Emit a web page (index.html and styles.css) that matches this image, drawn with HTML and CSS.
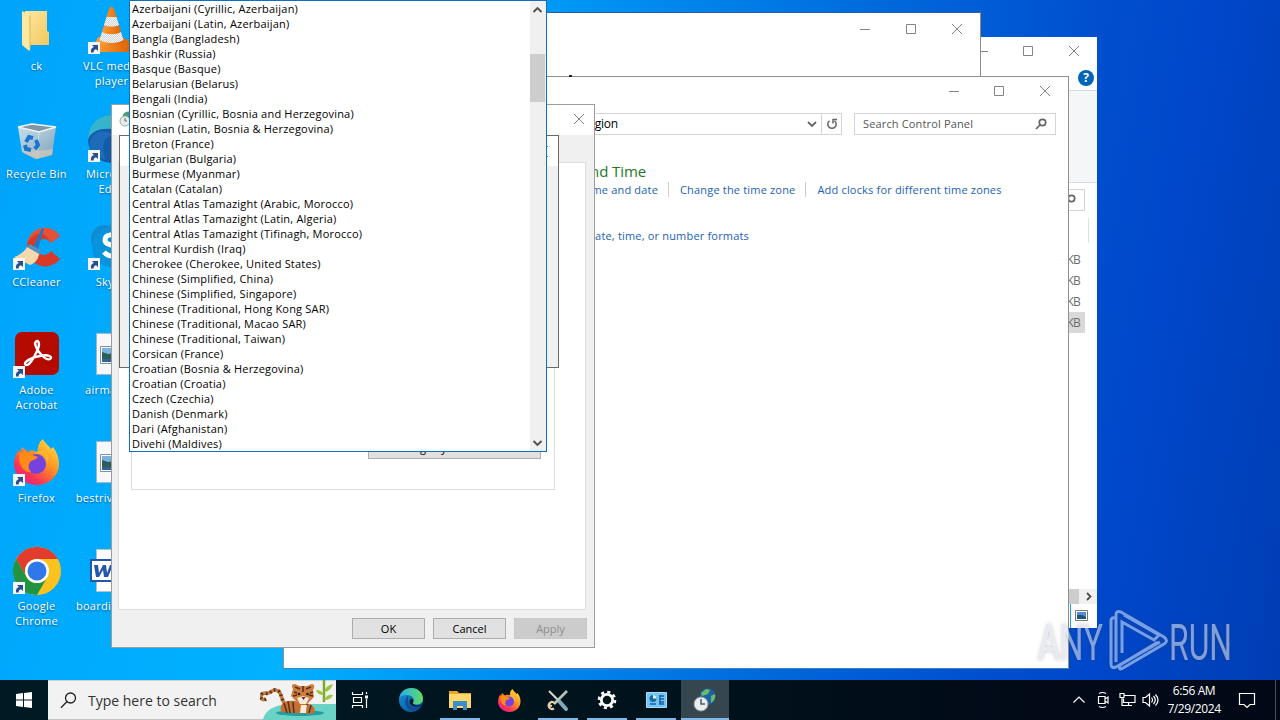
FILE: index.html
```html
<!DOCTYPE html>
<html lang="en">
<head>
    <meta charset="UTF-8">
    <title>Desktop</title>
    <link rel="stylesheet" href="styles.css">
</head>
<body>
    <!-- shared icons -->
    <svg width="0" height="0" class="defs">
        <defs>
            <linearGradient id="edgeBlue" x1="0" y1="0" x2="1" y2="1"><stop offset="0" stop-color="#1493dd"/><stop offset="1" stop-color="#0b4b94"/></linearGradient>
            <linearGradient id="edgeGreen" x1="0" y1="0" x2="1" y2="0"><stop offset="0" stop-color="#24aee8"/><stop offset="1" stop-color="#62dc64"/></linearGradient>
            <linearGradient id="fox" x1="1" y1="0" x2="0.2" y2="1"><stop offset="0" stop-color="#fff04a"/><stop offset="0.45" stop-color="#ff9422"/><stop offset="0.8" stop-color="#f93356"/><stop offset="1" stop-color="#e0209a"/></linearGradient>
            <linearGradient id="folder" x1="0" y1="0" x2="1" y2="1"><stop offset="0" stop-color="#ffe9a3"/><stop offset="1" stop-color="#f2c75c"/></linearGradient>
            <linearGradient id="bin" x1="0" y1="0" x2="1" y2="1"><stop offset="0" stop-color="#dfe8ee"/><stop offset="1" stop-color="#8fa3b0"/></linearGradient>
            <linearGradient id="cone" x1="0" y1="0" x2="1" y2="0"><stop offset="0" stop-color="#ffa53c"/><stop offset="1" stop-color="#dd5c00"/></linearGradient>
            <pattern id="dither" width="2" height="2" patternUnits="userSpaceOnUse"><rect width="2" height="2" fill="#f4f4f4"/><path d="M0 0h1v1H0zM1 1h1v1H1z" fill="#cfd6da"/></pattern>
        </defs>
        <symbol id="shortcut" viewBox="0 0 12 12">
            <rect width="12" height="12" fill="#f4f6f9"/>
            <path d="M3 10.5C2.500 7.500 3.700 5.600 5.900 5L4 3h6v6L8 7.200C6.200 7.600 5.500 8.800 5.700 10.500z" fill="#2b4f8c"/>
        </symbol>
        <symbol id="edge" viewBox="0 0 24 24">
            <circle cx="12" cy="12" r="12" fill="url(#edgeBlue)"/>
            <path d="M.3 10C1.500 3.500 6.500 0 12.500 0 19 0 24 5 24 10.500c0 4-3 6-6.500 6-2.500 0-4-1-3.500-2 1.700-2 .8-5.800-3.500-7C6.500 6.500 2 7.500.3 10z" fill="url(#edgeGreen)"/>
            <path d="M9 8c-4 3-4 10 1.500 14 5 2 10-1 12-5-4 2.500-14 2-13.500-4.500z" fill="#0e4f98"/>
            <path d="M10.500 13.500c0-2 1.300-3 2.500-2.800 1.500.4 1.700 2.400 1 3.500-.8 1.500 1.200 3.200 4.200 3.200 2 0 3.500-.6 4.600-1.200l-.6 1.400c-4 2-11.700.9-11.700-4.100z" fill="#06192a"/>
        </symbol>
        <symbol id="firefox" viewBox="0 0 46 46">
            <path d="M29 0c2 5 6 6 8 10l2-2c4 5 6 11 6 17 0 12-10 21-22 21S0 37 0 25c0-6 2-11 5-14l1 3 2-6 6 5c4-3 8-1 10 1-1-6 1-11 5-14z" fill="url(#fox)"/>
            <circle cx="22" cy="25" r="10" fill="#7442df"/>
            <path d="M5 14c5-1 8-1 11 1l8 3c-2 3-6 3-8 5-2 3-2 7 1 10C9 34 4 25 5 14z" fill="#ff8a16"/>
            <path d="M21 15c6-2 12 3 12 10 3-5 1-10-2-13-4-2-8 0-10 3z" fill="#ffb52c"/>
        </symbol>
        <symbol id="picture" viewBox="0 0 32 42">
            <path d="M.5.5h31v41H.5z" fill="#f8f8f8" stroke="#a5b7c4"/>
            <path d="M4.500 13.500h24v17h-24z" fill="#fff" stroke="#7893aa"/>
            <path d="M6 15h21v14H6z" fill="#78b3df"/>
            <path d="M6 19l6 2 6-1 9 2v7H6z" fill="#2f5d56"/>
            <path d="M6 26h21v3H6z" fill="#31639a"/>
        </symbol>
    </svg>

    <div class="desktop">
        <div class="icons">
            <div class="icon">
                <svg width="48" height="48" viewBox="0 0 48 48">
                    <path d="M12 4h22v20l2 1v13H12z" fill="url(#folder)"/>
                    <path d="M9 4l8 4v34c0 2-1 2-2 1L9 38z" fill="#ffe8a0"/>
                    <path d="M17 8v34" stroke="#dfb553" fill="none"/>
                </svg>
                <span>ck</span>
            </div>
            <div class="icon">
                <svg width="48" height="48" viewBox="0 0 48 48">
                    <path d="M5 12l14-3 24 3-4 28-17 4-13-7z" fill="url(#bin)" opacity=".9"/>
                    <path d="M5 12l14-3 24 3-17 5z" fill="#8196a4" stroke="#eef4f7" stroke-width="1.500"/>
                    <path d="M26 17l-2 27" stroke="#e7edf0" opacity=".6"/>
                    <path d="M10 34l15 2 15-2-1 6-15 4-13-6z" fill="#d7c9bb" opacity=".7"/>
                    <g fill="none" stroke="#1976cc" stroke-width="4"><path d="M13 27l3-5 4 1"/><path d="M23 25l2 5-3 4"/><path d="M18 35l-5-1-1-4"/></g>
                </svg>
                <span>Recycle Bin</span>
            </div>
            <div class="icon">
                <svg width="48" height="48" viewBox="0 0 48 48">
                    <path d="M47 13C37-2 14 5 14 24s22 26 33 12l-9-8c-5 7-14 4-14-4s9-11 14-4z" fill="#d83a27"/>
                    <path d="M47 13C37-2 16 4 14 20c8-12 18-13 24 0z" fill="#ef6042" opacity=".6"/>
                    <path d="M29 5l2 1-6 20-5-2z" fill="#2874bd"/>
                    <path d="M16 21l12 6-1 5-13-6z" fill="#4f91c7"/>
                    <path d="M14 24l12 7c-1 6-4 9-9 11L1 34c6-2 10-5 13-10z" fill="#f3d9ac"/>
                    <use href="#shortcut" x="0" y="35" width="12" height="12"/>
                </svg>
                <span>CCleaner</span>
            </div>
            <div class="icon">
                <svg width="48" height="48" viewBox="0 0 48 48">
                    <rect x="2" y="1" width="44" height="43" rx="7" fill="#b30b00"/>
                    <path d="M22 12c3-5 6 0 2 8-3 7-8 15-11 14-4-2 5-8 14-9 9-2 13 1 10 3-4 2-14-8-15-16z" fill="none" stroke="#fff" stroke-width="2.400"/>
                    <use href="#shortcut" x="0" y="35" width="12" height="12"/>
                </svg>
                <span>Adobe<br>Acrobat</span>
            </div>
            <div class="icon">
                <svg width="48" height="48" viewBox="0 0 48 48">
                    <use href="#firefox" x="1" y="0" width="46" height="46"/>
                    <use href="#shortcut" x="0" y="35" width="12" height="12"/>
                </svg>
                <span>Firefox</span>
            </div>
            <div class="icon">
                <svg width="48" height="48" viewBox="0 0 48 48">
                    <circle cx="24" cy="24" r="24" fill="#fcc31e"/>
                    <path d="M3.200 12A24 24 0 0 1 44.800 12H24A12 12 0 0 0 13.600 30z" fill="#e33b2e"/>
                    <path d="M3.200 12A24 24 0 0 0 24 48L34.400 30A12 12 0 0 1 13.600 30z" fill="#229342"/>
                    <circle cx="24" cy="24" r="12" fill="#fff"/><circle cx="24" cy="24" r="9.500" fill="#3078ea"/>
                    <use href="#shortcut" x="0" y="35" width="12" height="12"/>
                </svg>
                <span>Google<br>Chrome</span>
            </div>
            <div class="icon">
                <svg width="48" height="48" viewBox="0 0 48 48">
                    <path d="M10 30h24l7 4 4 11H3z" fill="url(#cone)"/>
                    <path d="M21 2c1-3 4-3 5 0l10 33c-5 4-20 4-25 0z" fill="url(#cone)"/>
                    <path d="M18.500 10h10l2.500 8c-4 2-11 2-15 0zM14 25c5 3 14 3 19 0l2.500 8c-6 4-18 4-24 0z" fill="url(#dither)"/>
                    <use href="#shortcut" x="0" y="35" width="12" height="12"/>
                </svg>
                <span>VLC media<br>player</span>
            </div>
            <div class="icon">
                <svg width="48" height="48" viewBox="0 0 48 48">
                    <circle cx="24" cy="24" r="24" fill="#115ba9"/>
                    <path d="M0 25C0 10 10 0 24 0s24 12 24 22c-8-11-18-12-25-8C10 13 2 18 0 25z" fill="#35b4ce"/>
                    <path d="M2 25c4-9 15-12 24-4-11-1-13 12-8 24C7 42 0 34 2 25z" fill="#1c6cb9"/>
                    <use href="#shortcut" x="0" y="35" width="12" height="12"/>
                </svg>
                <span>Microsoft<br>Edge</span>
            </div>
            <div class="icon">
                <svg width="48" height="48" viewBox="0 0 48 48">
                    <circle cx="17" cy="16" r="14" fill="#1489d2"/><circle cx="31" cy="32" r="14" fill="#0878d4"/><circle cx="24" cy="24" r="20" fill="#0894dd"/>
                    <path d="M32 15c-5-5-15-4-15 2 0 7 15 4 15 11 0 6-11 7-16 1" fill="none" stroke="#fff" stroke-width="5"/>
                    <use href="#shortcut" x="0" y="35" width="12" height="12"/>
                </svg>
                <span>Skype</span>
            </div>
            <div class="icon">
                <svg width="48" height="48" viewBox="0 0 48 48"><use href="#picture" x="8" y="2" width="32" height="42"/></svg>
                <span>airmarket</span>
            </div>
            <div class="icon">
                <svg width="48" height="48" viewBox="0 0 48 48"><use href="#picture" x="8" y="2" width="32" height="42"/></svg>
                <span>bestriver.png</span>
            </div>
            <div class="icon">
                <svg width="48" height="48" viewBox="0 0 48 48">
                    <path d="M8.500 2.500h31v42h-31z" fill="#fff" stroke="#b4c0ca"/>
                    <path d="M3 13h21v21H3z" fill="#fff" stroke="#2456ae" stroke-width="2"/>
                    <path d="M6 18h4l1 8 4-8h3l1 8 3-8h3l-5 12h-4l-1-7-4 7H8z" fill="#2456ae"/>
                </svg>
                <span>boardinga.rtf</span>
            </div>
        </div>

        <!-- file explorer -->
        <div class="window explorer">
            <div class="titlebar">
                <svg class="controls" width="102" height="12" viewBox="0 0 102 12"><path d="M0 6.500h10M45.500 1.500h9v9h-9zM91 1l10 10M101 1L91 11"/></svg>
            </div>
            <div class="help-row"><span class="help">?</span></div>
            <div class="ribbon"></div>
            <div class="explorer-search">
                <div class="box"><svg width="12" height="12" viewBox="0 0 12 12" class="lens"><circle cx="7.500" cy="4.500" r="3.200"/><path d="M5 7L1 11"/></svg></div>
            </div>
            <div class="preview-edge"></div>
            <div class="sizes">
                <span>KB</span>
                <span>KB</span>
                <span>KB</span>
                <span class="selected">KB</span>
            </div>
            <div class="hscroll">
                <div class="thumb"></div>
                <svg width="18" height="15" viewBox="0 0 18 15"><path d="M8 4l3.500 3.500L8 11" fill="none" stroke="#505050" stroke-width="1.800"/></svg>
            </div>
            <div class="status">
                <svg width="29" height="24" viewBox="0 0 29 24">
                    <path d="M.5 0v24" stroke="#26a0da"/>
                    <path d="M5.500 6.500h12v10h-12z" fill="#fff" stroke="#777"/>
                    <path d="M7 8h9v7H7z" fill="#4f91ce"/><path d="M7 11h5l4 2v2H7z" fill="#1f5377"/>
                </svg>
            </div>
        </div>

        <div class="window back">
            <div class="titlebar">
                <svg class="controls" width="102" height="12" viewBox="0 0 102 12"><path d="M-1 6.500h10M45.500 1.500h9v9h-9zM91 1l10 10M101 1L91 11"/></svg>
            </div>
        </div>

        <!-- control panel -->
        <div class="window panel">
            <div class="titlebar">
                <svg class="controls" width="102" height="12" viewBox="0 0 102 12"><path d="M0 6.500h10M45.500 1.500h9v9h-9zM91 1l10 10M101 1L91 11"/></svg>
            </div>
            <div class="address-row">
                <div class="address">
                    <span>Clock and Region</span>
                    <svg width="10" height="7" viewBox="0 0 10 7"><path d="M1 1l4 4 4-4" fill="none" stroke="#666" stroke-width="1.800"/></svg>
                </div>
                <div class="refresh">
                    <svg width="12" height="12" viewBox="0 0 12 12"><path d="M8.500 2.800A4.200 4.200 0 1 1 3.500 2.800" fill="none" stroke="#666" stroke-width="1.500"/><path d="M1 1.500h4v4" fill="none" stroke="#666" stroke-width="1.500"/></svg>
                </div>
                <div class="box">
                    <span>Search Control Panel</span>
                    <svg width="12" height="12" viewBox="0 0 12 12" class="lens"><circle cx="7.500" cy="4.500" r="3.200"/><path d="M5 7L1 11"/></svg>
                </div>
            </div>
            <div class="categories">
                <h1>Date and Time</h1>
                <div class="links">
                    <a class="set-time">Set the time and date</a>
                    <a class="zone">Change the time zone</a>
                    <a class="clocks">Add clocks for different time zones</a>
                </div>
                <div class="links region-links"><a class="formats">Change date, time, or number formats</a></div>
            </div>
        </div>
        <span class="caret-dot"></span>

        <!-- region dialog -->
        <div class="window region">
            <div class="titlebar">
                <svg width="16" height="16" viewBox="0 0 16 16"><circle cx="10" cy="6" r="5.500" fill="#4f9c73"/><circle cx="7" cy="10" r="5" fill="#e7eceb" stroke="#9aa"/><path d="M7 7v3h2" stroke="#667" fill="none"/></svg>
                <svg class="close" width="12" height="12" viewBox="0 0 12 12"><path d="M1 1l10 10M11 1L1 11"/></svg>
            </div>
            <div class="page">
                <div class="group">
                    <button class="change-locale">Change system locale...</button>
                </div>
            </div>
            <div class="buttons">
                <button>OK</button>
                <button>Cancel</button>
                <button disabled>Apply</button>
            </div>
        </div>

        <div class="window locale">
            <div class="titlebar">
                <svg width="11" height="11" viewBox="0 0 11 11"><path d="M.5.5l10 10M10.500.5l-10 10" stroke="#000" fill="none"/></svg>
            </div>
        </div>

        <div class="dropdown">
            <ul>
                <li>Azerbaijani (Cyrillic, Azerbaijan)</li>
                <li>Azerbaijani (Latin, Azerbaijan)</li>
                <li>Bangla (Bangladesh)</li>
                <li>Bashkir (Russia)</li>
                <li>Basque (Basque)</li>
                <li>Belarusian (Belarus)</li>
                <li>Bengali (India)</li>
                <li>Bosnian (Cyrillic, Bosnia and Herzegovina)</li>
                <li>Bosnian (Latin, Bosnia &amp; Herzegovina)</li>
                <li>Breton (France)</li>
                <li>Bulgarian (Bulgaria)</li>
                <li>Burmese (Myanmar)</li>
                <li>Catalan (Catalan)</li>
                <li>Central Atlas Tamazight (Arabic, Morocco)</li>
                <li>Central Atlas Tamazight (Latin, Algeria)</li>
                <li>Central Atlas Tamazight (Tifinagh, Morocco)</li>
                <li>Central Kurdish (Iraq)</li>
                <li>Cherokee (Cherokee, United States)</li>
                <li>Chinese (Simplified, China)</li>
                <li>Chinese (Simplified, Singapore)</li>
                <li>Chinese (Traditional, Hong Kong SAR)</li>
                <li>Chinese (Traditional, Macao SAR)</li>
                <li>Chinese (Traditional, Taiwan)</li>
                <li>Corsican (France)</li>
                <li>Croatian (Bosnia &amp; Herzegovina)</li>
                <li>Croatian (Croatia)</li>
                <li>Czech (Czechia)</li>
                <li>Danish (Denmark)</li>
                <li>Dari (Afghanistan)</li>
                <li>Divehi (Maldives)</li>
            </ul>
            <div class="scrollbar">
                <svg width="15" height="17" viewBox="0 0 15 17"><path d="M3.500 11l4-4 4 4"/></svg>
                <div class="thumb"></div>
                <svg width="15" height="17" viewBox="0 0 15 17"><path d="M3.500 7l4 4 4-4"/></svg>
            </div>
        </div>

        <svg class="watermark" width="210" height="70" viewBox="0 0 210 70">
            <g class="letters">
                <text x="3" y="54" textLength="65" lengthAdjust="spacingAndGlyphs">ANY</text>
                <text x="134" y="54" textLength="63" lengthAdjust="spacingAndGlyphs">RUN</text>
            </g>
            <g class="play">
                <path d="M80 12q-4-1-4 3v43q0 5 5 3l44-25"/>
                <path d="M81 56V9q0-5 5-3l43 25q5 4 0 7L88 62q-5 3-3-3l38-23"/>
                <path d="M87 47V16l32 18 5-5-35-20"/>
            </g>
        </svg>
    </div>

    <div class="taskbar">
        <div class="start">
            <svg width="16" height="16" viewBox="0 0 16 16"><path d="M0 2l7-1v6.500H0zM8 1l8-1v7.500H8zM0 8.500h7V15l-7-1zM8 8.500h8V16l-8-1z" fill="#fff"/></svg>
        </div>
        <div class="search">
            <svg width="17" height="17" viewBox="0 0 17 17"><circle cx="10.500" cy="6" r="5" fill="none" stroke="#222" stroke-width="1.300"/><path d="M7 9.500L1 15.800" stroke="#222" stroke-width="1.300"/></svg>
            <span>Type here to search</span>
            <svg class="tiger" width="76" height="40" viewBox="0 0 76 40">
                <path d="M3 40C6 26 22 23 45 24h31v16z" fill="#6ad3c6"/>
                <ellipse cx="40" cy="33" rx="24" ry="3" fill="#249da0"/>
                <path d="M6 19C0 22-1 13 5 13c6 2 6-4 11-3 6 1 4 8 9 14" fill="none" stroke="#c9783a" stroke-width="3.500"/>
                <path d="M6 19C0 22-1 13 5 13c6 2 6-4 11-3 6 1 4 8 9 14" fill="none" stroke="#463127" stroke-width="3.500" stroke-dasharray="1.500 3"/>
                <path d="M21 32c-2-9 4-12 14-11l14 3c7 2 7 8 3 10z" fill="#c56f31"/>
                <path d="M24 23l3 10M28 21l2 12M33 22l1 11M47 24l-2 9M51 25l-2 8" stroke="#513224" stroke-width="1.500"/>
                <path d="M33 9q-3-5 2-5l4 2h8l5-2q4 1 1 6l1 7-7 7h-8l-8-8z" fill="#d07c3c"/>
                <path d="M37 18l6-2 6 2-3 6h-6zM41 25h6l-1 8h-6z" fill="#f6ead9"/>
                <path d="M35 7l5 2M43 6v6M51 7l-5 2M33 16l4-1M53 16l-4-1M34 12l3 1M53 12l-3 1" stroke="#513224" stroke-width="1.600"/>
                <circle cx="39" cy="14" r="1.300" fill="#222"/><circle cx="47.500" cy="14" r="1.300" fill="#222"/>
                <path d="M41.500 17h4l-2 3z" fill="#573030"/>
                <path d="M64 22V0" stroke="#79a92f" stroke-width="2.500"/>
                <path d="M64 15q-7 0-8-5 6 0 8 5zM64 12q6 0 9-8-7 1-9 8zM64 20q7 0 9-5-6-1-9 5z" fill="#9bc53e"/>
            </svg>
        </div>
        <div class="task-view">
            <svg width="18" height="18" viewBox="0 0 18 18"><path d="M1 3.500h11M1 14.500h11M2.500 6.500h8v5h-8zM1.500 1v2.500M11.500 1v2.500M1.500 14.500V17M11.500 14.500V17M15.500 1v2M15.500 8v9" fill="none" stroke="#fff" stroke-width="1.200"/><path d="M14 4.500h3v3h-3z" fill="#fff"/></svg>
        </div>
        <div class="apps">
            <div class="app"><svg width="24" height="24"><use href="#edge"/></svg></div>
            <div class="app running"><svg width="22" height="20" viewBox="0 0 22 20"><path d="M0 1h8l2 2h12v15H0z" fill="#e7a52a"/><path d="M0 4h22v14H0z" fill="#ffd86b"/><path d="M4 11h14v9h-4v-4H8v4H4z" fill="#3c8cc9"/></svg></div>
            <div class="app"><svg width="23" height="23"><use href="#firefox"/></svg></div>
            <div class="app running"><svg width="24" height="24" viewBox="0 0 24 24"><path d="M3 3l9 9" stroke="#d8d8ce" stroke-width="2"/><path d="M13 13l7 8" stroke="#7fa9bb" stroke-width="4" stroke-linecap="round"/><path d="M21 3L8 16" stroke="#b3c3b4" stroke-width="2.600"/><path d="M9 15.500a3.500 3.500 0 1 0-1 5M2 17l4 1" fill="none" stroke="#e2cfa7" stroke-width="2.300"/></svg></div>
            <div class="app running"><svg width="20" height="20" viewBox="0 0 20 20"><circle cx="10" cy="10" r="5.700" fill="none" stroke="#fff" stroke-width="2.800"/><circle cx="10" cy="10" r="8" fill="none" stroke="#fff" stroke-width="2.600" stroke-dasharray="3.100 3.180"/></svg></div>
            <div class="app running"><svg width="21" height="17" viewBox="0 0 21 17"><path d="M.5.5h20v15H.5z" fill="#73c5f2" stroke="#9bdcff"/><circle cx="7" cy="6.500" r="3.500" fill="#196aa7"/><path d="M7 6.500V3a3.500 3.500 0 0 1 3.500 3.500z" fill="#e8f8ff"/><path d="M13 4h5M13 7h5M13 10h5M13 12h5M4 12h6M14 3v9" stroke="#1762a1" stroke-width="1.300"/></svg></div>
            <div class="app running active"><svg width="24" height="24" viewBox="0 0 24 24"><circle cx="14.500" cy="8.500" r="8" fill="#1c62a6"/><path d="M8 5l5-4 4 1-2 4-6 2zM18 8l4-2c1 4-1 7-4 9z" fill="#6abc64"/><circle cx="8" cy="16" r="7" fill="#e9edef" stroke="#939a9f"/><path d="M8 11v5h4" fill="none" stroke="#4f5961" stroke-width="1.500"/></svg></div>
        </div>
        <div class="tray">
            <div class="tray-icon"><svg width="14" height="16" viewBox="0 0 14 16"><path d="M1.500 10.500L7 5l5.500 5.500"/></svg></div>
            <div class="tray-icon"><svg width="14" height="18" viewBox="0 0 14 18"><path d="M2.500 5.500H9v7H2.500zM9 8l3-2v6l-3-2M3 2.500Q6.500.5 10 2.500M3 15.500q3.500 2 7 0"/></svg></div>
            <div class="tray-icon"><svg width="17" height="16" viewBox="0 0 17 16"><path d="M5 3.500h11v7H4.500v-4M9.500 10.500v3M6 13.500h7M1 1.500h4v4H1zM3 5.500v8h3"/></svg></div>
            <div class="tray-icon"><svg width="18" height="16" viewBox="0 0 18 16"><path d="M1 5.500h2.500l4-3.500v12l-4-3.500H1zM9.500 5.500q2 2.500 0 5M11.500 4q3.500 4 0 8M13.500 2.500q5 5.500 0 11"/></svg></div>
            <div class="clock">6:56 AM<br>7/29/2024</div>
            <svg class="notify" width="18" height="18" viewBox="0 0 18 18"><path d="M1.500 2.500h15v11H12l-3 3-3-3H1.500z"/></svg>
        </div>
        <div class="show-desktop"></div>
    </div>
</body>
</html>
```
FILE: styles.css
```css
* {
    box-sizing: border-box;
}
body {
    margin: 0;
    width: 1280px;
    height: 720px;
    overflow: hidden;
    display: flex;
    flex-direction: column;
    font: 11px/15px "Open Sans", "Noto Sans", sans-serif;
    color: #000;
}
svg {
    display: block;
    flex: none;
}
.defs {
    position: absolute;
}
.desktop {
    position: relative;
    height: 680px;
    overflow: hidden;
    background: linear-gradient(100deg, #00a4fb 0%, #00b2ff 28%, #008bf0 46%, #0067db 64%, #0050cf 78%, #0047ca 87%, #003db3 100%);
}
.icons {
    display: grid;
    grid-template-rows: repeat(6, 108px);
    grid-auto-flow: column;
    grid-auto-columns: 75px;
    padding-top: 7px;
    margin-left: -1px;
    width: 150px;
}
.icon {
    display: flex;
    flex-direction: column;
    align-items: center;
    gap: 3px;
    color: #fff;
    text-align: center;
    text-shadow: 0 1px 2px rgba(0, 50, 100, 0.7);
    white-space: nowrap;
    letter-spacing: 0.3px;
}

/* windows */
.window {
    position: absolute;
    background: #fff;
    display: flex;
    flex-direction: column;
}
.titlebar {
    display: flex;
    justify-content: flex-end;
    align-items: center;
    flex: none;
}
.controls {
    overflow: visible;
}
.controls path,
.close path {
    fill: none;
    stroke: #858585;
}
.lens {
    fill: none;
    stroke: #666;
    stroke-width: 1.7;
}
.box {
    display: flex;
    align-items: center;
    justify-content: space-between;
    border: 1px solid #d4d4d4;
    height: 22px;
    padding: 0 8px;
    color: #555;
}

.explorer {
    left: 600px;
    top: 37px;
    width: 497px;
    height: 591px;
}
.explorer .titlebar {
    height: 29px;
    padding: 0 17px 2px 0;
}
.help-row {
    display: flex;
    justify-content: flex-end;
    height: 24px;
    padding: 4px 3px 0;
}
.help {
    width: 16px;
    height: 16px;
    border-radius: 50%;
    background: #0065b8;
    color: #fff;
    font-weight: bold;
    font-size: 12px;
    line-height: 16px;
    text-align: center;
}
.ribbon {
    height: 93px;
    background: #f5f6f7;
    border-top: 1px solid #dadbdc;
    border-bottom: 1px solid #dadbdc;
}
.explorer-search {
    display: flex;
    justify-content: flex-end;
    padding: 6px 12px 0 0;
}
.explorer-search .box {
    width: 180px;
    justify-content: flex-end;
    padding-right: 8px;
}
.preview-edge {
    height: 25px;
    margin: 7px 8px 0 0;
    border-right: 1px solid #d5e8d5;
}
.sizes {
    display: flex;
    flex-direction: column;
    margin: 6px 12px 0 0;
    text-align: right;
    color: #6d6d6d;
    font-size: 12px;
    letter-spacing: -0.8px;
}
.sizes span {
    height: 21px;
    line-height: 22px;
    padding-right: 5px;
}
.sizes .selected {
    background: #d9d9d9;
}
.hscroll {
    display: flex;
    justify-content: flex-end;
    height: 15px;
    margin-top: auto;
    background: #f0f0f0;
}
.hscroll .thumb {
    width: 30px;
    background: #cdcdcd;
}
.status {
    display: flex;
    justify-content: flex-end;
    height: 24px;
}
.status svg {
    margin-right: -2px;
}

.back {
    left: 400px;
    top: 12px;
    width: 581px;
    height: 300px;
    border-top: 1px solid #2b5ca5;
    border-right: 1px solid #8d8d8d;
}
.back .titlebar {
    height: 33px;
    padding: 0 17px 2px 0;
}

.panel {
    left: 283px;
    top: 76px;
    width: 786px;
    height: 593px;
    border: 1px solid #8f8f8f;
    border-bottom-color: #3b7fc4;
}
.panel .titlebar {
    height: 29px;
    padding: 0 17px 2px 0;
}
.address-row {
    display: flex;
    justify-content: flex-end;
    margin-top: 7px;
    padding-right: 12px;
}
.address {
    display: flex;
    align-items: center;
    justify-content: space-between;
    width: 351px;
    height: 22px;
    padding: 0 4px 0 58px;
    border: 1px solid #d4d4d4;
    font-size: 12px;
}
.address span {
    width: 88px;
    margin-top: -1px;
    direction: rtl;
    letter-spacing: -0.2px;
    white-space: nowrap;
}
.refresh {
    display: flex;
    align-items: center;
    justify-content: center;
    width: 20px;
    height: 22px;
    border: 1px solid #d4d4d4;
    border-left: none;
    margin-right: 12px;
}
.refresh svg {
    transform: scaleX(-1);
}
.address-row .box {
    width: 202px;
    letter-spacing: 0.15px;
}
.box span {
    margin-top: -2px;
}
.categories {
    padding: 26px 0 0 200px;
}
h1 {
    width: 162px;
    margin: 0;
    direction: rtl;
    font-size: 15px;
    font-weight: normal;
    line-height: 20px;
    color: #1d7a1d;
    letter-spacing: -0.1px;
}
.links {
    display: flex;
    height: 16px;
    align-items: center;
    color: #1a5fb8;
    letter-spacing: 0.18px;
    white-space: nowrap;
}
.links a + a {
    margin-left: 10px;
    padding-left: 11px;
    border-left: 1px solid #ccc;
}
.set-time {
    width: 174px;
    direction: rtl;
}
.region-links {
    margin-top: 30px;
}
.formats {
    width: 265px;
    direction: rtl;
}
.caret-dot {
    position: absolute;
    left: 569px;
    top: 75px;
    width: 3px;
    height: 2px;
    background: #222;
}

.region {
    left: 111px;
    top: 104px;
    width: 484px;
    height: 544px;
    border: 1px solid #9c9c9c;
    background: #f0f0f0;
    padding: 0 6px;
}
.region .titlebar {
    height: 30px;
    margin: 0 -6px;
    padding: 0 9px 2px 6px;
    justify-content: space-between;
    background: #fff;
}
.page {
    height: 448px;
    margin: 27px 2px 0 0;
    padding: 12px;
    background: #fff;
    border: 1px solid #dcdcdc;
}
.group {
    display: flex;
    justify-content: flex-end;
    align-items: flex-end;
    width: 424px;
    height: 315px;
    padding: 0 13px 30px 0;
    border: 1px solid #dcdcdc;
}
button {
    width: 73px;
    height: 21px;
    padding: 0;
    border: 1px solid #adadad;
    background: #e1e1e1;
    font: inherit;
    color: #000;
}
button:disabled {
    border-color: #c8c8c8;
    background: #cccccc;
    color: #8c8c8c;
}
.change-locale {
    width: 173px;
    height: 23px;
    letter-spacing: 0.2px;
}
.buttons {
    display: flex;
    justify-content: flex-end;
    gap: 8px;
    padding: 8px 1px 0 0;
}

.locale {
    left: 119px;
    top: 135px;
    width: 440px;
    height: 233px;
    border: 1px solid #6a6a6a;
    background: #f0f0f0;
}
.locale .titlebar {
    height: 30px;
    padding-right: 10px;
    background: #fff;
}

.dropdown {
    position: absolute;
    left: 129px;
    top: 0;
    width: 418px;
    height: 452px;
    display: flex;
    justify-content: space-between;
    border: 1px solid #0f70c0;
    background: #fff;
}
.dropdown ul {
    list-style: none;
    margin: 0;
    padding: 0 0 0 2px;
    letter-spacing: 0.2px;
    white-space: nowrap;
}
.dropdown li {
    height: 15px;
}
.scrollbar {
    display: flex;
    flex-direction: column;
    width: 16px;
    padding-right: 1px;
    background: #f0f0f0;
}
.scrollbar path {
    fill: none;
    stroke: #505050;
    stroke-width: 1.9;
}
.scrollbar .thumb {
    height: 48px;
    margin: 36px 0 auto;
    background: #cdcdcd;
}

.watermark {
    position: absolute;
    left: 1035px;
    top: 606px;
    opacity: 0.6;
    filter: drop-shadow(0 0 2px rgba(60, 60, 60, 0.5));
}
.letters {
    font: 50px Roboto, sans-serif;
    fill: #d9dfeb;
}
.play {
    fill: none;
    stroke: #c4dcff;
    stroke-width: 3;
}

/* taskbar */
.taskbar {
    display: flex;
    height: 40px;
    background: linear-gradient(90deg, #001a24, #00131d 50%, #020a18 80%, #020916);
}
.start,
.task-view,
.app {
    display: flex;
    align-items: center;
    justify-content: center;
    width: 48px;
    height: 40px;
}
.search {
    display: flex;
    align-items: center;
    width: 288px;
    padding-left: 12px;
    background: #f2f2f2;
    border-top: 1px solid #d0d0d0;
    border-bottom: 1px solid #c4c4c4;
    color: #333;
    font-size: 14px;
}
.search span {
    margin-left: 11px;
}
.tiger {
    margin-left: auto;
}
.apps {
    display: flex;
    gap: 1px;
    margin-left: 3px;
}
.running {
    background: linear-gradient(#80b8ea, #80b8ea) center bottom / 40px 2px no-repeat;
}
.active {
    background: linear-gradient(#80b8ea, #80b8ea) center bottom / 48px 2px no-repeat #36464f;
}
.tray {
    display: flex;
    align-items: center;
    margin-left: auto;
    color: #fff;
}
.tray-icon {
    display: flex;
    justify-content: center;
    width: 24px;
}
.tray path {
    fill: none;
    stroke: #fff;
    stroke-width: 1.2;
}
.clock {
    width: 62px;
    font-size: 12px;
    line-height: 18px;
    letter-spacing: -0.4px;
    text-align: center;
}
.notify {
    margin-left: 13px;
}
.show-desktop {
    width: 5px;
    margin-left: 19px;
    border-left: 1px solid #4a5058;
}
```
